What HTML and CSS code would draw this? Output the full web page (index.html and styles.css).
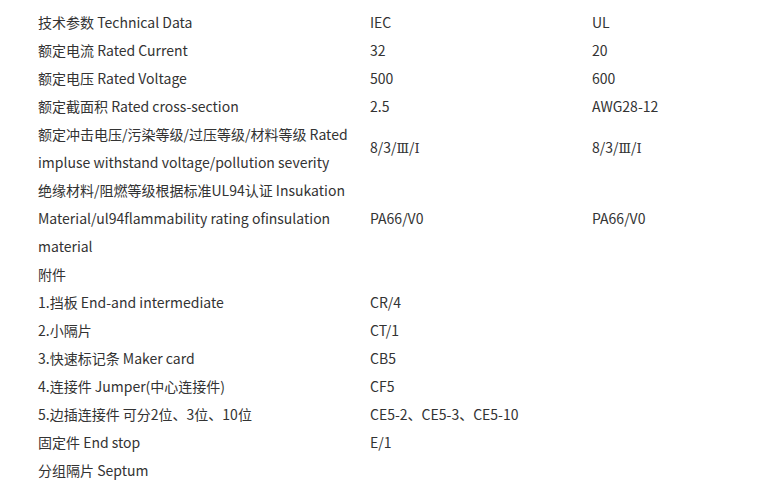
FILE: index.html
```html
<!DOCTYPE html>
<html lang="zh-CN">
<head>
<meta charset="utf-8">
<link rel="stylesheet" href="styles.css">
</head>
<body>
<table class="spec">
  <tr><td class="c1">技术参数 Technical Data</td><td class="c2">IEC</td><td class="c3">UL</td></tr>
  <tr><td class="c1">额定电流 Rated Current</td><td class="c2">32</td><td class="c3">20</td></tr>
  <tr><td class="c1">额定电压 Rated Voltage</td><td class="c2">500</td><td class="c3">600</td></tr>
  <tr><td class="c1">额定截面积 Rated cross-section</td><td class="c2">2.5</td><td class="c3">AWG28-12</td></tr>
  <tr><td class="c1">额定冲击电压/污染等级/过压等级/材料等级 Rated impluse withstand voltage/pollution severity</td><td class="c2">8/3/<span class="roman">Ⅲ</span>/<span class="roman">Ⅰ</span></td><td class="c3">8/3/<span class="roman">Ⅲ</span>/<span class="roman">Ⅰ</span></td></tr>
  <tr><td class="c1">绝缘材料/阻燃等级根据标准UL94认证 Insukation Material/ul94flammability rating ofinsulation material</td><td class="c2">PA66/V0</td><td class="c3">PA66/V0</td></tr>
  <tr><td class="c1">附件</td><td class="c2"></td><td class="c3"></td></tr>
  <tr><td class="c1">1.挡板 End-and intermediate</td><td class="c2">CR/4</td><td class="c3"></td></tr>
  <tr><td class="c1">2.小隔片</td><td class="c2">CT/1</td><td class="c3"></td></tr>
  <tr><td class="c1">3.快速标记条 Maker card</td><td class="c2">CB5</td><td class="c3"></td></tr>
  <tr><td class="c1">4.连接件 Jumper(中心连接件)</td><td class="c2">CF5</td><td class="c3"></td></tr>
  <tr><td class="c1">5.边插连接件 可分2位、3位、10位</td><td class="c2">CE5-2、CE5-3、CE5-10</td><td class="c3"></td></tr>
  <tr><td class="c1">固定件 End stop</td><td class="c2">E/1</td><td class="c3"></td></tr>
  <tr><td class="c1">分组隔片 Septum</td><td class="c2"></td><td class="c3"></td></tr>
</table>
</body>
</html>
```
FILE: styles.css
```css
html, body {
  margin: 0;
  padding: 0;
  background: #ffffff;
}
body {
  padding: 8px 0 0 38px;
  font-family: "Noto Sans CJK SC", "Noto Sans", sans-serif;
  font-size: 14px;
  color: #333333;
}
.spec {
  border-collapse: collapse;
  table-layout: fixed;
  width: 700px;
}
.spec td {
  padding: 0;
  line-height: 28px;
  vertical-align: middle;
}
.c1 {
  width: 322px;
  padding-right: 10px !important;
}
.c2 {
  width: 222px;
}
.c3 {
  width: 146px;
}
.roman {
  font-family: "DejaVu Serif", "Liberation Serif", serif;
  font-size: 13px;
}
```
